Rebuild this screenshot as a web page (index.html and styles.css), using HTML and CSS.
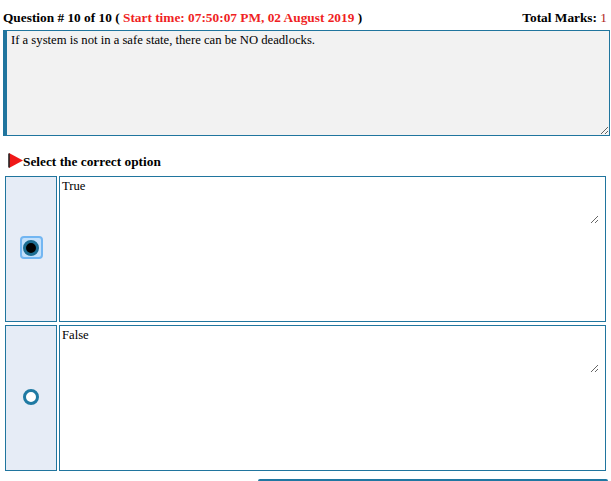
FILE: index.html
```html
<!DOCTYPE html>
<html>
<head>
<meta charset="utf-8">
<link rel="stylesheet" href="styles.css">
</head>
<body>
<div class="header">
  <div class="qtitle">Question # 10 of 10 ( <span class="red">Start time: 07:50:07 PM, 02 August 2019</span> )</div>
  <div class="marks">Total Marks: <span class="markval">1</span></div>
</div>
<textarea class="question">If a system is not in a safe state, there can be NO deadlocks.</textarea>
<div class="select">
  <svg class="arrow" width="15" height="15" viewBox="0 0 15 15"><polygon points="1,0 15,7.5 1,15" fill="#f01818"/><line x1="1" y1="0.5" x2="1" y2="14.5" stroke="#222" stroke-width="1.6"/></svg>
  <span>Select the correct option</span>
</div>
<div class="options">
  <div class="opt">
    <div class="opt-radio"><span class="focus"><span class="radio checked"></span></span></div>
    <div class="opt-text"><textarea class="answer">True</textarea></div>
  </div>
  <div class="opt">
    <div class="opt-radio"><span class="radio"></span></div>
    <div class="opt-text"><textarea class="answer">False</textarea></div>
  </div>
</div>
<div class="bottom-bar"></div>
</body>
</html>
```
FILE: styles.css
```css
html, body {
  margin: 0;
  padding: 0;
  overflow: hidden;
  background: #fff;
}
body {
  font-family: "Liberation Serif", "Times New Roman", serif;
  font-size: 13.33px;
  color: #000;
}
.header {
  display: flex;
  justify-content: space-between;
  padding: 10px 4px 0 3px;
  font-weight: bold;
  line-height: 15px;
}
.red { color: #f01f24; }
.markval { color: #b01c1c; font-weight: normal; }
.question {
  display: block;
  box-sizing: border-box;
  margin: 5px 0 0 3px;
  width: 607px;
  height: 106px;
  border: 1px solid #20759e;
  border-left: 4px solid #20759e;
  background: #f2f2f2;
  padding: 2px 4px;
  font-family: "Liberation Serif", "Times New Roman", serif;
  font-size: 12.67px;
  line-height: 15px;
  color: #000;
  resize: both;
  outline: none;
}
.select {
  display: flex;
  align-items: flex-end;
  margin: 18px 0 0 8px;
  font-weight: bold;
  line-height: 15px;
  height: 15px;
}
.arrow { display: block; margin-bottom: 1px; }
.options {
  display: flex;
  flex-direction: column;
  gap: 3px;
  margin: 7px 0 0 5px;
}
.opt {
  display: flex;
  gap: 2px;
  height: 146px;
}
.opt-radio {
  box-sizing: border-box;
  width: 52px;
  border: 1px solid #20759e;
  background: #e6ecf6;
  display: flex;
  align-items: center;
  justify-content: center;
  padding-bottom: 3px;
}
.opt-text {
  box-sizing: border-box;
  width: 547px;
  border: 1px solid #20759e;
  background: #fff;
}
.answer {
  display: block;
  box-sizing: border-box;
  width: 539px;
  height: 47px;
  border: none;
  padding: 2px;
  margin: 0;
  font-family: "Liberation Serif", "Times New Roman", serif;
  font-size: 12.67px;
  line-height: 15px;
  color: #000;
  background: #fff;
  outline: none;
  resize: both;
}
.focus {
  box-sizing: border-box;
  width: 23px;
  height: 23px;
  border-radius: 4px;
  border: 2px solid #72b6f2;
  background: #c3e0fb;
  display: flex;
  align-items: center;
  justify-content: center;
}
.radio {
  box-sizing: border-box;
  display: block;
  width: 16px;
  height: 16px;
  border-radius: 50%;
  border: 3px solid #1f7aa3;
  background: #fff;
}
.radio.checked {
  border: 3px solid #1c6d92;
  background: #000;
}
.bottom-bar {
  margin: 8px 0 0 258px;
  width: 350px;
  height: 2px;
  background: #1f77a2;
  border-radius: 2px 2px 0 0;
}
```
